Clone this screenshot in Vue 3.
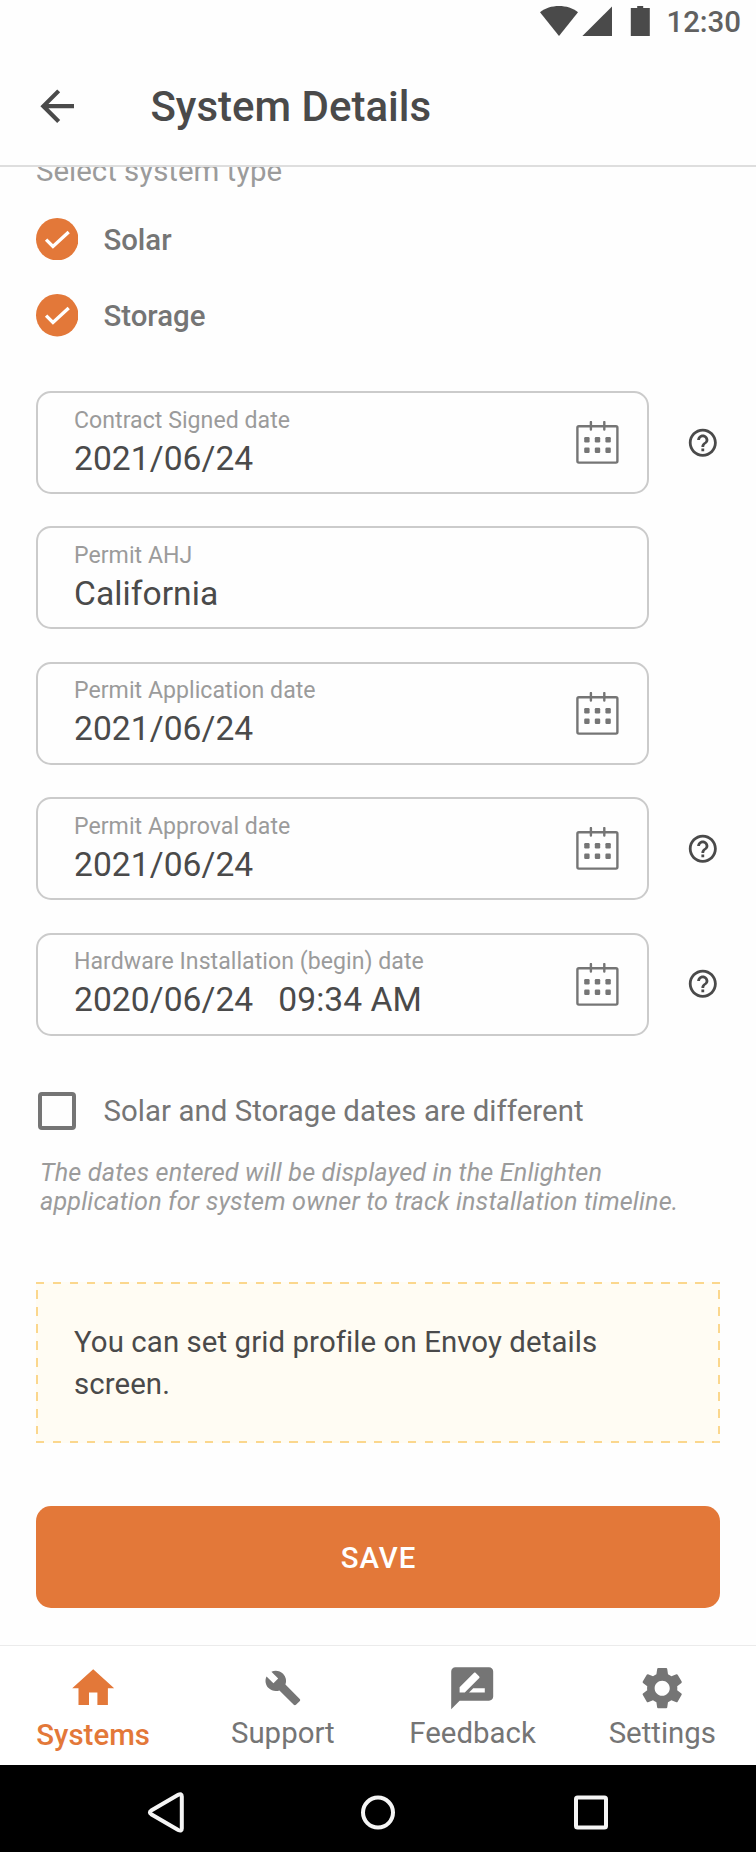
<template>
  <div class="screen">

    <!-- Android status bar -->
    <div class="status-bar">
      <svg class="status-icons" width="112" height="32" viewBox="0 0 112 32">
        <path d="M0 7.2C5 3 12 1 19 1s14 2 19 6.2L19 31z" />
        <path d="M42.4 31L72 1.4V31z" />
        <path d="M90.8 3h6.4V1h6v2h6.6v28h-19z" />
      </svg>
      <span class="clock">12:30</span>
    </div>

    <!-- App bar -->
    <header class="app-bar">
      <button class="back-btn" title="Back">
        <svg width="50.4" height="50.4" viewBox="0 0 24 24">
          <path d="M20 11H7.83l5.59-5.59L12 4l-8 8 8 8 1.41-1.41L7.83 13H20v-2z" />
        </svg>
      </button>
      <h1 class="title">System Details</h1>
    </header>

    <!-- Form, scrolled slightly under the app bar -->
    <main class="content">
      <p class="section-label">Select system type</p>

      <div class="types">
        <label v-for="type in systemTypes" :key="type" class="type-row">
          <svg width="42.4" height="42.4" viewBox="0 0 42 42">
            <circle cx="21" cy="21" r="21" fill="#e37839" />
            <path d="M10 21.4L16.8 28.2L32.4 13.8" fill="none" stroke="#fff" stroke-width="3.3" />
          </svg>
          <span>{{ type }}</span>
        </label>
      </div>

      <div class="fields">
        <div v-for="field in fields" :key="field.label" class="field-row">
          <div class="field">
            <div class="field-text">
              <span class="field-label">{{ field.label }}</span>
              <span class="field-value">
                <span>{{ field.value }}</span>
                <span v-if="field.time">{{ field.time }}</span>
              </span>
            </div>
            <svg v-if="field.calendar" class="calendar" width="43" height="43" viewBox="0 0 43 43">
              <rect x="1.4" y="5.2" width="40" height="36.4" rx="1.5" fill="none" stroke="#757575" stroke-width="2.4" />
              <path d="M14.9 1v7.6M28.3 1v7.6" stroke="#757575" stroke-width="2.4" stroke-linecap="round" />
              <g fill="#757575">
                <rect v-for="n in 6" :key="n" :x="8.2 + ((n - 1) % 3) * 10.6" :y="n > 3 ? 26.6 : 16" width="5.4" height="5.4" rx="1.2" />
              </g>
            </svg>
          </div>
          <svg v-if="field.help" width="33.6" height="33.6" viewBox="0 0 24 24">
            <path
              d="M11 18h2v-2h-2v2zm1-16C6.48 2 2 6.48 2 12s4.48 10 10 10 10-4.48 10-10S17.52 2 12 2zm0 18c-4.41 0-8-3.59-8-8s3.59-8 8-8 8 3.59 8 8-3.59 8-8 8zm0-14c-2.21 0-4 1.79-4 4h2c0-1.1.9-2 2-2s2 .9 2 2c0 2-3 1.75-3 5h2c0-2.25 3-2.5 3-5 0-2.21-1.79-4-4-4z"
              fill="#4a4a4a"
            />
          </svg>
        </div>
      </div>

      <label class="checkbox-row">
        <span class="checkbox"></span>
        <span>Solar and Storage dates are different</span>
      </label>

      <p class="hint">
        The dates entered will be displayed in the Enlighten<br />
        application for system owner to track installation timeline.
      </p>

      <div class="notice">You can set grid profile on Envoy details screen.</div>

      <button class="save-btn">SAVE</button>
    </main>

    <!-- Bottom tabs -->
    <nav class="tabs">
      <a v-for="tab in tabs" :key="tab.name" :class="['tab', { active: tab.active }]">
        <span class="tab-icon">
          <svg :width="tab.size" :height="tab.size" viewBox="0 0 24 24"><path :d="tab.icon" /></svg>
        </span>
        <span class="tab-name">{{ tab.name }}</span>
      </a>
    </nav>

    <!-- Android system buttons -->
    <div class="system-bar">
      <svg width="44" height="44" viewBox="0 0 44 44">
        <path d="M8.2 20.6L35.2 4.8Q38.8 3 38.8 6.4V38.4Q38.8 41.8 35.2 40L8.2 24.2Q5.6 22.4 8.2 20.6z" />
      </svg>
      <svg width="44" height="44" viewBox="0 0 44 44"><circle cx="22" cy="22.6" r="15" /></svg>
      <svg width="44" height="44" viewBox="0 0 44 44"><rect x="7" y="7.6" width="30" height="30" rx="1.6" /></svg>
    </div>

  </div>
</template>

<script setup>
const systemTypes = ['Solar', 'Storage']

const fields = [
  { label: 'Contract Signed date', value: '2021/06/24', calendar: true, help: true },
  { label: 'Permit AHJ', value: 'California' },
  { label: 'Permit Application date', value: '2021/06/24', calendar: true },
  { label: 'Permit Approval date', value: '2021/06/24', calendar: true, help: true },
  { label: 'Hardware Installation (begin) date', value: '2020/06/24', time: '09:34 AM', calendar: true, help: true },
]

// Icons are on a 24 x 24 grid
const tabs = [
  { name: 'Systems', active: true, size: 50.4, icon: 'M10 20v-6h4v6h5v-8h3L12 3 2 12h3v8z' },
  { name: 'Support', size: 37.8, icon: 'M22.7 19l-9.1-9.1c.9-2.3.4-5-1.5-6.9-2-2-5-2.4-7.4-1.3L9 6 6 9 1.6 4.7C.4 7.1.9 10.1 2.9 12.1c1.9 1.9 4.6 2.4 6.9 1.5l9.1 9.1c.4.4 1 .4 1.4 0l2.3-2.3c.5-.4.5-1.1.1-1.4z' },
  { name: 'Feedback', size: 50.4, icon: 'M20 2H4c-1.1 0-1.99.9-1.99 2L2 22l4-4h14c1.1 0 2-.9 2-2V4c0-1.1-.9-2-2-2zM6 14v-2.47l6.88-6.88c.2-.2.51-.2.71 0l1.77 1.77c.2.2.2.51 0 .71L8.47 14H6zm12 0h-7.5l2-2H18v2z' },
  { name: 'Settings', size: 50.4, icon: 'M19.14 12.94c.04-.3.06-.61.06-.94 0-.32-.02-.64-.07-.94l2.03-1.58c.18-.14.23-.41.12-.61l-1.92-3.32c-.12-.22-.37-.29-.59-.22l-2.39.96c-.5-.38-1.03-.7-1.62-.94l-.36-2.54c-.04-.24-.24-.41-.48-.41h-3.84c-.24 0-.43.17-.47.41l-.36 2.54c-.59.24-1.13.57-1.62.94l-2.39-.96c-.22-.08-.47 0-.59.22L2.74 8.87c-.12.21-.08.47.12.61l2.03 1.58c-.05.3-.09.63-.09.94s.02.64.07.94l-2.03 1.58c-.18.14-.23.41-.12.61l1.92 3.32c.12.22.37.29.59.22l2.39-.96c.5.38 1.03.7 1.62.94l.36 2.54c.05.24.24.41.48.41h3.84c.24 0 .44-.17.47-.41l.36-2.54c.59-.24 1.13-.56 1.62-.94l2.39.96c.22.08.47 0 .59-.22l1.92-3.32c.12-.22.07-.47-.12-.61l-2.01-1.58zM12 15.6c-1.98 0-3.6-1.62-3.6-3.6s1.62-3.6 3.6-3.6 3.6 1.62 3.6 3.6-1.62 3.6-3.6 3.6z' },
]
</script>

<style>
body { margin: 0; background: #fff; }
</style>

<style scoped>
.screen {
  width: 756px;
  height: 1852px;
  display: flex;
  flex-direction: column;
  overflow: hidden;
  background: #fefefe;
  color: #4a4a4a;
  font-family: Roboto, "Liberation Sans", sans-serif;
  font-size: 29.4px;
}
svg { display: block; flex-shrink: 0; }
p, h1 { margin: 0; }
button { border: none; background: none; padding: 0; font: inherit; }

/* Status bar */
.status-bar {
  height: 50px;
  flex-shrink: 0;
  display: flex;
  justify-content: flex-end;
  padding: 5px 15px 0 0;
  box-sizing: border-box;
}
.status-icons { fill: #4a4a4a; margin-right: 14px; }
.clock { color: #616161; font-weight: 500; line-height: 34px; }

/* App bar */
.app-bar {
  height: 117px;
  flex-shrink: 0;
  box-sizing: border-box;
  display: flex;
  align-items: center;
  padding: 0 32px;
  border-bottom: 2px solid #dedede;
}
.back-btn { fill: #4a4a4a; margin-top: -3px; }
.title { margin: -1px 0 0 68px; font-size: 42px; font-weight: 500; line-height: 50px; }

/* Form */
.content {
  height: 1478px;
  flex-shrink: 0;
  box-sizing: border-box;
  overflow: hidden;
  padding: 0 36px;
}
.section-label { margin-top: -13px; color: #9b9b9b; line-height: 35px; }
.types { display: flex; flex-direction: column; gap: 33.8px; margin-top: 29px; }
.type-row {
  display: flex;
  align-items: center;
  gap: 25px;
  height: 42.4px;
  color: #757575;
  font-weight: 500;
}
.type-row span { padding-top: 2px; }
.fields {
  display: flex;
  flex-direction: column;
  gap: 32.3px;
  margin: 54.4px 0 0 -0.5px;
}
.field-row { display: flex; align-items: center; gap: 37px; }
.field {
  width: 613.5px;
  height: 103.1px;
  flex-shrink: 0;
  box-sizing: border-box;
  display: flex;
  align-items: center;
  justify-content: space-between;
  padding: 0 28px 0 36.5px;
  border: 2px solid #cbcbcb;
  border-radius: 15px;
}
.field-text { display: flex; flex-direction: column; padding-top: 2px; }
.field-label { color: #9b9b9b; font-size: 23.1px; line-height: 30px; letter-spacing: 0.04px; }
.field-value {
  display: flex;
  gap: 25px;
  font-size: 33.6px;
  line-height: 46px;
  letter-spacing: 0.06px;
}

.checkbox-row {
  display: flex;
  align-items: center;
  gap: 27.5px;
  margin-top: 56.5px;
  padding-left: 2px;
  height: 38px;
  color: #757575;
  letter-spacing: 0.05px;
}
.checkbox {
  width: 38px; height: 38px;
  box-sizing: border-box;
  border: 4px solid #757575;
  border-radius: 4px;
}
.hint {
  margin: 27.5px 0 0 4px;
  color: #9b9b9b;
  font-size: 25.2px;
  font-style: italic;
  line-height: 29.4px;
  letter-spacing: 0.155px;
  white-space: nowrap;
}

/* Long dashes, so drawn with gradients rather than a dashed border */
.notice {
  --dash: #fbd78d;
  height: 161px;
  box-sizing: border-box;
  margin-top: 65.7px;
  padding: 39px 38px;
  line-height: 42px;
  letter-spacing: 0.09px;
  background:
    repeating-linear-gradient(90deg, var(--dash) 0 8.45px, transparent 8.45px 16.9px) 0 0 / 100% 2px no-repeat,
    repeating-linear-gradient(90deg, var(--dash) 0 8.45px, transparent 8.45px 16.9px) 0 100% / 100% 2px no-repeat,
    repeating-linear-gradient(transparent 0 8.47px, var(--dash) 8.47px 16.94px) 0 0 / 2px 100% no-repeat,
    repeating-linear-gradient(transparent 0 8.47px, var(--dash) 8.47px 16.94px) 100% 0 / 2px 100% no-repeat,
    #fffcf3;
}
.save-btn {
  width: 100%;
  height: 102px;
  margin-top: 63px;
  padding: 1px 0 0 1px;
  border-radius: 15px;
  background: #e37839;
  color: #fff;
  font-weight: 500;
  letter-spacing: 1px;
}

/* Bottom tabs */
.tabs {
  height: 119.5px;
  flex-shrink: 0;
  box-sizing: border-box;
  display: flex;
  margin: 0 -1.2px 0 -1.8px;
  border-top: 1px solid #ebebeb;
  background: #fff;
}
.tab {
  flex: 1;
  display: flex;
  flex-direction: column;
  align-items: center;
  padding-top: 17px;
  color: #757575;
  fill: #757575;
}
.tab-icon { height: 50.4px; display: flex; align-items: center; }
.tab-name { line-height: 36px; margin-top: 2px; }
.tab.active { color: #e37839; fill: #e37839; font-weight: 500; }
.tab.active .tab-name { margin-top: 4px; }

/* System buttons */
.system-bar {
  flex: 1;
  display: flex;
  align-items: flex-start;
  justify-content: space-between;
  padding: 25.5px 143px 0;
  background: #000;
}
.system-bar svg { fill: none; stroke: #f5f5f5; stroke-width: 4; }
</style>
